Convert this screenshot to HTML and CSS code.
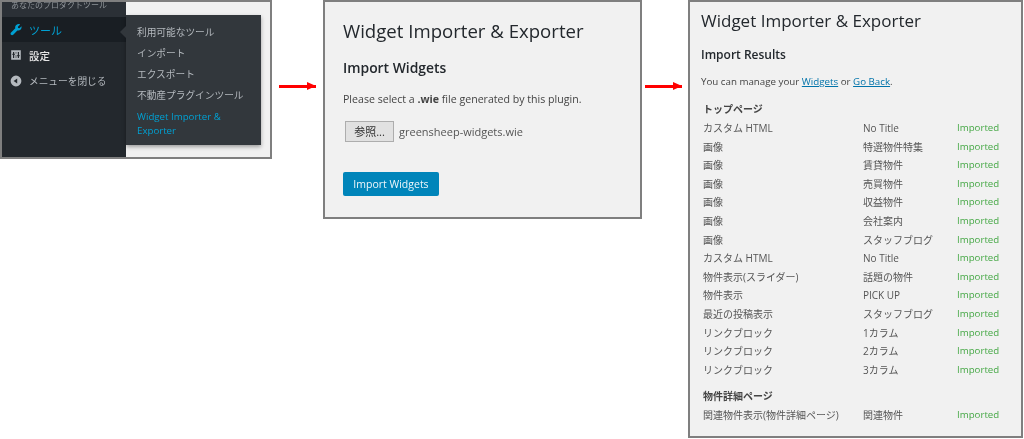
FILE: index.html
```html
<!DOCTYPE html>
<html lang="ja">
<head>
<meta charset="utf-8">
<title>Widget Importer &amp; Exporter</title>
<link rel="stylesheet" href="styles.css">
</head>
<body>
<main class="canvas">
  <section class="shot shot-menu">
    <nav class="sidebar">
      <div class="site">あなたのプロダクトツール</div>
      <div class="item active">
        <svg class="ico" viewBox="0 0 20 20"><path fill="#00a0d2" d="M16.7 2.6l-3 3 .3 2.2 2.2.3 3-3c.4 2.2-.2 4-1.6 5.3-1.300 1.200-3 1.500-4.700 1L6.500 17.900c-1 1-2.500 1-3.400.1-1-1-.9-2.500.1-3.400l6.500-6.400c-.5-1.700-.2-3.400 1-4.700 1.400-1.400 3.500-2 5.900-1.900z"/></svg>
        <span>ツール</span>
      </div>
      <div class="item settings">
        <svg class="ico ico-s" viewBox="0 0 20 20"><path fill="#b4b9be" fill-rule="evenodd" d="M2 2h16v16H2zM5 5v3H4v2h1v5h2v-5h1V8H7V5zm8 0v5h-1v2h1v3h2v-3h1v-2h-1V5zM9.500 5v3h1V5zm0 5v5h1v-5z"/></svg>
        <span>設定</span>
      </div>
      <div class="item closer">
        <svg class="ico ico-s" viewBox="0 0 20 20"><path fill="#b4b9be" fill-rule="evenodd" d="M10 1a9 9 0 1 1 0 18 9 9 0 0 1 0-18zm2 5l-6 4 6 4z"/></svg>
        <span>メニューを閉じる</span>
      </div>
    </nav>
    <div class="flyout">
      <a>利用可能なツール</a>
      <a>インポート</a>
      <a>エクスポート</a>
      <a>不動産プラグインツール</a>
      <a class="current">Widget Importer &amp; Exporter</a>
    </div>
  </section>

  <div class="arrow arrow-a"></div>

  <section class="shot shot-import">
    <h1>Widget Importer &amp; Exporter</h1>
    <h2>Import Widgets</h2>
    <p>Please select a <b>.wie</b> file generated by this plugin.</p>
    <div class="file"><span class="browse">参照...</span><span>greensheep-widgets.wie</span></div>
    <span class="primary">Import Widgets</span>
  </section>

  <div class="arrow arrow-b"></div>

  <section class="shot shot-results">
    <h1>Widget Importer &amp; Exporter</h1>
    <h2>Import Results</h2>
    <p>You can manage your <a>Widgets</a> or <a>Go Back</a>.</p>
    <h3>トップページ</h3>
    <div class="row"><span>カスタム HTML</span><span>No Title</span><span class="ok">Imported</span></div>
    <div class="row"><span>画像</span><span>特選物件特集</span><span class="ok">Imported</span></div>
    <div class="row"><span>画像</span><span>賃貸物件</span><span class="ok">Imported</span></div>
    <div class="row"><span>画像</span><span>売買物件</span><span class="ok">Imported</span></div>
    <div class="row"><span>画像</span><span>収益物件</span><span class="ok">Imported</span></div>
    <div class="row"><span>画像</span><span>会社案内</span><span class="ok">Imported</span></div>
    <div class="row"><span>画像</span><span>スタッフブログ</span><span class="ok">Imported</span></div>
    <div class="row"><span>カスタム HTML</span><span>No Title</span><span class="ok">Imported</span></div>
    <div class="row"><span>物件表示(スライダー)</span><span>話題の物件</span><span class="ok">Imported</span></div>
    <div class="row"><span>物件表示</span><span>PICK UP</span><span class="ok">Imported</span></div>
    <div class="row"><span>最近の投稿表示</span><span>スタッフブログ</span><span class="ok">Imported</span></div>
    <div class="row"><span>リンクブロック</span><span>1カラム</span><span class="ok">Imported</span></div>
    <div class="row"><span>リンクブロック</span><span>2カラム</span><span class="ok">Imported</span></div>
    <div class="row"><span>リンクブロック</span><span>3カラム</span><span class="ok">Imported</span></div>
    <h3 class="second">物件詳細ページ</h3>
    <div class="row"><span>関連物件表示(物件詳細ページ)</span><span>関連物件</span><span class="ok">Imported</span></div>
  </section>
</main>
</body>
</html>
```
FILE: styles.css
```css
* { box-sizing: border-box; }
html, body { margin: 0; height: 100%; background: #fff; overflow: hidden; }
body { font-family: "Open Sans", "Noto Sans CJK JP", sans-serif; color: #444; }
.canvas { position: relative; width: 1024px; height: 439px; }
.shot {
  position: absolute;
  top: 0;
  background: #f1f1f1;
  border: 2px solid #7f7f7f;
  filter: blur(0.45px);
}
.shot-menu { left: 0; width: 272px; height: 159px; display: flex; }
.shot-import { left: 323px; width: 319px; height: 219px; padding: 0 18px; }
.shot-results { left: 688px; width: 335px; height: 438px; padding: 0 11px; }

/* menu */
.sidebar { width: 124px; background: #23282d; color: #e6e6e6; font-size: 10.500px; flex: none; }
.site { height: 15px; line-height: 5px; overflow: hidden; color: #8f9499; font-size: 8px; padding-left: 9px; background: #2b3036; }
.item { display: flex; align-items: center; height: 25px; padding-left: 7px; gap: 7px; }
.item.active { background: #191e23; color: #00a0d2; font-size: 11px; }
.item.settings { font-weight: 500; height: 26px; }
.item.closer { color: #b4b9be; font-size: 9.700px; }
.ico { width: 13px; height: 13px; flex: none; }
.ico-s { width: 12px; height: 12px; margin-left: 1px; }
.flyout {
  position: relative;
  margin-top: 13px;
  width: 135px;
  height: 130px;
  padding: 7px 11px 0;
  background: #32373c;
  color: #b4b9be;
  font-size: 9.700px;
  box-shadow: 0 2px 4px rgba(0,0,0,.35);
}
.flyout::before {
  content: "";
  position: absolute;
  left: -6px;
  top: 11px;
  border: 6px solid transparent;
  border-left: 0;
  border-right-color: #32373c;
}
.flyout a { display: block; line-height: 14px; padding: 3.500px 0; }
.flyout a.current { color: #00a0d2; }

/* arrows */
.arrow { position: absolute; top: 85px; width: 37px; height: 3px; background: #f00; }
.arrow::after {
  content: "";
  position: absolute;
  right: 0;
  top: -3px;
  border-left: 9px solid #f00;
  border-top: 4.500px solid transparent;
  border-bottom: 4.500px solid transparent;
}
.arrow-a { left: 279px; }
.arrow-b { left: 645px; }

/* headings */
h1 { margin: 0; font-weight: 400; font-size: 18.600px; line-height: 26px; color: #23282d; }
h2 { margin: 0; font-weight: 600; font-size: 13.900px; line-height: 18px; color: #23282d; }
p { margin: 0; font-size: 10.600px; line-height: 14px; color: #444; }
.shot-import h1 { margin-top: 16px; }
.shot-import h2 { margin-top: 15px; }
.shot-import p { margin-top: 15px; }
.file { display: flex; align-items: center; gap: 5px; margin: 15px 0 0 2px; font-size: 11px; color: #555; }
.browse {
  width: 49px; height: 21px; line-height: 19px; text-align: center;
  background: #e1e1e1; border: 1px solid #adadad; color: #333; font-size: 11px;
}
.primary {
  display: block; width: 96px; height: 24px; margin-top: 30px; line-height: 24px;
  text-align: center; background: #0085ba; color: #eef6fa; border-radius: 2px; font-size: 10.500px;
}
.shot-results h1 { margin-top: 6px; font-size: 17px; }
.shot-results h2 { margin-top: 12px; font-size: 12px; }
.shot-results p { margin-top: 11px; font-size: 9.750px; }
.shot-results p a { color: #0073aa; text-decoration: underline; }
h3 { margin: 11px 0 1px 2px; font-size: 10px; line-height: 18px; font-weight: 700; color: #444; }
h3.second { margin-top: 7.500px; }
.row {
  display: grid;
  grid-template-columns: 160px 94px 1fr;
  margin-left: 2px;
  height: 18.600px;
  line-height: 18.600px;
  font-size: 10px;
  color: #555;
}
.row span { white-space: nowrap; }
.ok { color: #46a846; font-size: 9.700px; }
```
